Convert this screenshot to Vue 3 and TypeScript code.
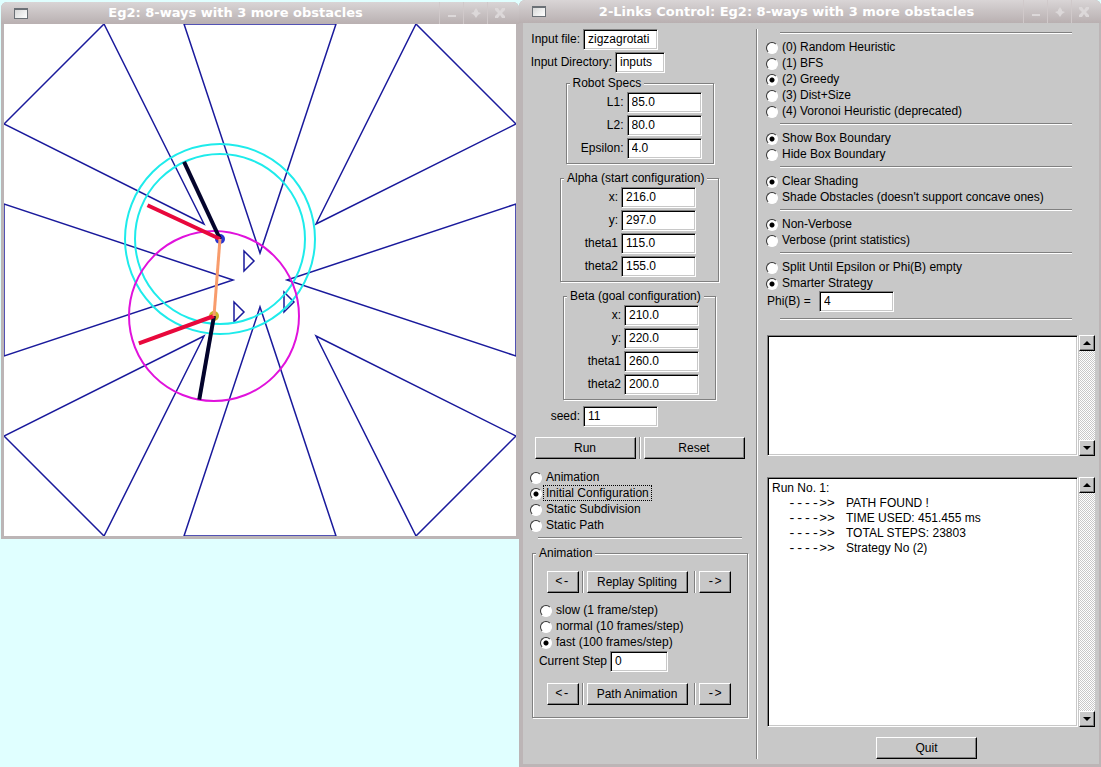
<script setup lang="ts">
import { reactive, ref } from 'vue'

interface Config { x: string; y: string; theta1: string; theta2: string }
interface Field { id: string; label: string; value: string }
interface RadioGroup { name: string; options: string[]; selected: number }

const SIZE = 512

const files = reactive({ file: 'zigzagrotati', dir: 'inputs' })

const specs = reactive<Field[]>([
  { id: 'l1', label: 'L1:', value: '85.0' },
  { id: 'l2', label: 'L2:', value: '80.0' },
  { id: 'epsilon', label: 'Epsilon:', value: '4.0' },
])

const configFields = (prefix: string, c: Config): Field[] => [
  { id: prefix + '-x', label: 'x:', value: c.x },
  { id: prefix + '-y', label: 'y:', value: c.y },
  { id: prefix + '-t1', label: 'theta1', value: c.theta1 },
  { id: prefix + '-t2', label: 'theta2', value: c.theta2 },
]

const boxes = reactive([
  { kind: 'specs', title: 'Robot Specs', fields: specs },
  { kind: 'alpha', title: 'Alpha (start configuration)', fields: configFields('alpha', { x: '216.0', y: '297.0', theta1: '115.0', theta2: '155.0' }) },
  { kind: 'beta', title: 'Beta (goal configuration)', fields: configFields('beta', { x: '210.0', y: '220.0', theta1: '260.0', theta2: '200.0' }) },
])

const seed = ref('11')
const step = ref('0')
const phi = ref('4')

const display = reactive<RadioGroup>({
  name: 'display',
  options: ['Animation', 'Initial Configuration', 'Static Subdivision', 'Static Path'],
  selected: 1,
})
const speed = reactive<RadioGroup>({
  name: 'speed',
  options: ['slow (1 frame/step)', 'normal (10 frames/step)', 'fast (100 frames/step)'],
  selected: 2,
})
const options = reactive<RadioGroup[]>([
  { name: 'heuristic', options: ['(0) Random Heuristic', '(1) BFS', '(2) Greedy', '(3) Dist+Size', '(4) Voronoi Heuristic (deprecated)'], selected: 2 },
  { name: 'boundary', options: ['Show Box Boundary', 'Hide Box Boundary'], selected: 0 },
  { name: 'shading', options: ['Clear Shading', "Shade Obstacles (doesn't support concave ones)"], selected: 0 },
  { name: 'verbose', options: ['Non-Verbose', 'Verbose (print statistics)'], selected: 0 },
  { name: 'strategy', options: ['Split Until Epsilon or Phi(B) empty', 'Smarter Strategy'], selected: 1 },
])

const log = ['PATH FOUND !', 'TIME USED: 451.455 ms', 'TOTAL STEPS: 23803', 'Strategy No (2)']

const obstacles = [
  '100,0 0,100 200,200',
  '180,0 332,0 256,229',
  '412,0 512,100 312,200',
  '0,180 0,332 229,256',
  '512,180 512,332 283,256',
  '0,412 100,512 200,312',
  '180,512 332,512 256,283',
  '512,412 412,512 312,312',
  '240,227 240,247 250,237',
  '230,278 230,298 240,288',
  '280,268 280,288 290,278',
]

const tip = (x: number, y: number, len: number, deg: number) => ({
  x: x + len * Math.cos((deg * Math.PI) / 180),
  y: SIZE - y - len * Math.sin((deg * Math.PI) / 180),
})

const robots = [
  { id: 'start', x: 216, y: SIZE - 297, a: tip(216, 297, 85, 115), b: tip(216, 297, 80, 155) },
  { id: 'goal', x: 210, y: SIZE - 220, a: tip(210, 220, 85, 260), b: tip(210, 220, 80, 200) },
]
</script>

<template>
  <div class="desktop">
    <section class="window view">
      <header class="titlebar">
        <span class="menu-icon"></span>
        <h1>Eg2: 8-ways with 3 more obstacles</h1>
        <button class="wm" type="button" aria-label="Minimize"><svg viewBox="0 0 12 12"><path d="M2 8h8v2H2z" /></svg></button>
        <button class="wm" type="button" aria-label="Maximize"><svg viewBox="0 0 12 12"><path d="M6 1l2 3v1l3 1-3 2-2 3-2-3-3-2 3-1V4z" /></svg></button>
        <button class="wm" type="button" aria-label="Close"><svg viewBox="0 0 12 12"><path d="M1 1h3l2 3 2-3h3v2L8 6l3 3v2H8L6 8l-2 3H1V9l3-3-3-3z" /></svg></button>
      </header>
      <svg class="canvas" :viewBox="`0 0 ${SIZE} ${SIZE}`">
        <g class="obstacle">
          <polygon v-for="p in obstacles" :key="p" :points="p" />
        </g>
        <circle class="reach" cx="216" cy="215" r="85" />
        <circle class="reach" cx="216" cy="215" r="95" />
        <circle class="goal-reach" cx="210" cy="292" r="85" />
        <circle v-for="r in robots" :key="r.id" :class="r.id" :cx="r.x" :cy="r.y" r="5" />
        <g v-for="r in robots" :key="r.id + '-links'">
          <line class="link-a" :x1="r.x" :y1="r.y" :x2="r.a.x" :y2="r.a.y" />
          <line class="link-b" :x1="r.x" :y1="r.y" :x2="r.b.x" :y2="r.b.y" />
        </g>
        <line class="path" :x1="robots[0].x" :y1="robots[0].y" :x2="robots[1].x" :y2="robots[1].y" />
      </svg>
    </section>

    <section class="window control">
      <header class="titlebar">
        <span class="menu-icon"></span>
        <h1>2-Links Control: Eg2: 8-ways with 3 more obstacles</h1>
        <button class="wm" type="button" aria-label="Minimize"><svg viewBox="0 0 12 12"><path d="M2 8h8v2H2z" /></svg></button>
        <button class="wm" type="button" aria-label="Maximize"><svg viewBox="0 0 12 12"><path d="M6 1l2 3v1l3 1-3 2-2 3-2-3-3-2 3-1V4z" /></svg></button>
        <button class="wm" type="button" aria-label="Close"><svg viewBox="0 0 12 12"><path d="M1 1h3l2 3 2-3h3v2L8 6l3 3v2H8L6 8l-2 3H1V9l3-3-3-3z" /></svg></button>
      </header>

      <div class="body">
        <form class="left" @submit.prevent>
          <div class="row">
            <label class="cap" for="file">Input file:</label>
            <input id="file" v-model="files.file" class="text" type="text" />
          </div>
          <div class="row">
            <label class="cap wide" for="dir">Input Directory:</label>
            <input id="dir" v-model="files.dir" class="text short" type="text" />
          </div>

          <fieldset v-for="b in boxes" :key="b.kind" class="box" :class="b.kind">
            <legend>{{ b.title }}</legend>
            <div v-for="f in b.fields" :key="f.id" class="row">
              <label class="cap" :for="f.id">{{ f.label }}</label>
              <input :id="f.id" v-model="f.value" class="text" type="text" />
            </div>
          </fieldset>

          <div class="row seed">
            <label class="cap" for="seed">seed:</label>
            <input id="seed" v-model="seed" class="text" type="text" />
          </div>

          <div class="buttons main">
            <button class="push" type="button">Run</button>
            <i class="vsep"></i>
            <button class="push" type="button">Reset</button>
          </div>

          <div class="radios display" role="radiogroup">
            <label v-for="(o, i) in display.options" :key="o" class="radio">
              <input v-model="display.selected" type="radio" :name="display.name" :value="i" />
              <span :class="{ focus: display.selected === i }">{{ o }}</span>
            </label>
          </div>
          <hr class="short-rule" />

          <fieldset class="box anim">
            <legend>Animation</legend>
            <div class="buttons">
              <button class="push arrow" type="button">&lt;-</button>
              <i class="vsep"></i>
              <button class="push" type="button">Replay Spliting</button>
              <i class="vsep late"></i>
              <button class="push arrow" type="button">-&gt;</button>
            </div>
            <div class="radios" role="radiogroup">
              <label v-for="(o, i) in speed.options" :key="o" class="radio">
                <input v-model="speed.selected" type="radio" :name="speed.name" :value="i" />
                <span>{{ o }}</span>
              </label>
            </div>
            <div class="row">
              <label class="cap" for="step">Current Step</label>
              <input id="step" v-model="step" class="text" type="text" />
            </div>
            <div class="buttons">
              <button class="push arrow" type="button">&lt;-</button>
              <i class="vsep"></i>
              <button class="push" type="button">Path Animation</button>
              <i class="vsep late"></i>
              <button class="push arrow" type="button">-&gt;</button>
            </div>
          </fieldset>
        </form>

        <i class="divider"></i>

        <form class="right" @submit.prevent>
          <hr />
          <template v-for="(g, n) in options" :key="g.name">
            <div class="radios" role="radiogroup">
              <label v-for="(o, i) in g.options" :key="o" class="radio">
                <input v-model="g.selected" type="radio" :name="g.name" :value="i" />
                <span>{{ o }}</span>
              </label>
            </div>
            <hr v-if="n < options.length - 1" />
          </template>
          <div class="row phi">
            <label class="cap" for="phi">Phi(B) =</label>
            <input id="phi" v-model="phi" class="text" type="text" />
          </div>
          <hr />

          <div class="pane stats">
            <textarea class="sunken" readonly aria-label="Statistics"></textarea>
            <div class="scroll">
              <button type="button" aria-label="Scroll up"><svg viewBox="0 0 8 4"><path d="M0 4L4 0l4 4z" /></svg></button>
              <button type="button" aria-label="Scroll down"><svg viewBox="0 0 8 4"><path d="M0 0h8L4 4z" /></svg></button>
            </div>
          </div>
          <div class="pane log">
            <div class="sunken" role="log">
              <p>Run No. 1:</p>
              <p v-for="l in log" :key="l" class="entry"><span class="mark">----&gt;&gt;</span><span>{{ l }}</span></p>
            </div>
            <div class="scroll">
              <button type="button" aria-label="Scroll up"><svg viewBox="0 0 8 4"><path d="M0 4L4 0l4 4z" /></svg></button>
              <button type="button" aria-label="Scroll down"><svg viewBox="0 0 8 4"><path d="M0 0h8L4 4z" /></svg></button>
            </div>
          </div>
          <button class="push quit" type="button">Quit</button>
        </form>
      </div>
    </section>
  </div>
</template>

<style>
body {
  margin: 0;
  background: #e0ffff;
}
</style>

<style scoped>
* {
  box-sizing: border-box;
}
.desktop {
  display: grid;
  grid-template-columns: minmax(0, 519fr) minmax(560px, 582fr);
  align-items: start;
  min-height: 100vh;
  color: #000;
  background: #e0ffff;
  font: 12px/14px "Liberation Sans", Arial, sans-serif;
}
.window {
  background: #bcb5b6;
}
.view {
  margin: 2px 0 0 1px;
  padding: 0 3px 3px;
  border-radius: 6px 6px 0 0;
}
.control {
  display: flex;
  flex-direction: column;
  align-self: stretch;
  padding: 0 2px 3px 4px;
  border-radius: 6px 6px 0 0;
}
.titlebar {
  display: flex;
  align-items: center;
  height: 22px;
  margin: 0 -3px;
  padding: 0 8px 0 13px;
  border-radius: 6px 6px 0 0;
  background: linear-gradient(#d9d5d6, #cac4c5 45%, #b9b0b1);
}
.control .titlebar {
  height: 23px;
  margin: 0 -2px 0 -4px;
  padding-right: 6px;
}
.menu-icon {
  width: 14px;
  height: 11px;
  border: 1px solid #6b7076;
  border-top-width: 2px;
  background: linear-gradient(135deg, #d8d8d8, #fff);
}
h1 {
  flex: 1;
  margin: 0;
  padding-left: 4px;
  color: #fff;
  font: bold 13px/16px "DejaVu Sans", sans-serif;
  text-align: center;
  white-space: nowrap;
}
.wm {
  display: grid;
  place-items: center;
  width: 24px;
  height: 100%;
  padding: 0;
  border: 0;
  border-left: 1px solid #d0c9ca;
  background: none;
}
.wm svg {
  width: 12px;
  height: 12px;
  fill: #dcd8d9;
}
.canvas {
  display: block;
  width: 100%;
  height: auto;
  background: #fff;
  fill: none;
}
.obstacle {
  stroke: #1a1a9c;
  stroke-width: 1.5;
}
.reach {
  stroke: #1eebeb;
  stroke-width: 2;
}
.goal-reach {
  stroke: #e012dc;
  stroke-width: 2;
}
.start {
  fill: #2a35cf;
}
.goal {
  fill: #c9b62c;
}
.link-a {
  stroke: #04042c;
  stroke-width: 4;
}
.link-b {
  stroke: #e8083c;
  stroke-width: 4;
}
.path {
  stroke: #f89c6c;
  stroke-width: 3;
}

.body {
  display: flex;
  flex: 1;
  padding: 6px 0 5px;
  background: #c8c8c8;
}
.left {
  width: 233px;
}
.divider {
  width: 2px;
  border-left: 1px solid #808080;
  background: #fff;
}
.right {
  display: flex;
  flex: 1;
  flex-direction: column;
  min-width: 0;
  padding: 3px 4px 0 8px;
}
.row {
  display: flex;
  align-items: flex-start;
  height: 23px;
}
.cap {
  width: 60px;
  padding-right: 3px;
  line-height: 20px;
  text-align: right;
  white-space: nowrap;
}
.cap.wide {
  width: 92px;
}
.text,
.sunken {
  border: 1px solid;
  border-color: #808080 #fff #fff #808080;
  border-radius: 0;
  outline: 0;
  color: #000;
  background: #fff;
  box-shadow: inset 1px 1px #000, inset -1px -1px #c8c8c8;
  font: inherit;
}
.text {
  width: 75px;
  height: 21px;
  padding: 0 4px 1px;
}
.text.short {
  width: 50px;
}
.box {
  min-width: 0;
  margin: 7px auto 0;
  padding: 2px 0;
  border: 1px solid #808080;
  box-shadow: 1px 1px #fff, inset 1px 1px #fff;
}
.box legend {
  height: 14px;
  margin-left: 3px;
  padding: 0 3px;
  background: #c8c8c8;
  white-space: nowrap;
}
.specs {
  width: 148px;
  margin-top: 1px;
}
.alpha {
  width: 159px;
}
.beta {
  width: 153px;
}
.seed {
  margin-top: 6px;
}
.buttons {
  display: flex;
  justify-content: center;
  gap: 3px;
}
.buttons.main {
  margin-top: 8px;
}
.push {
  width: 101px;
  height: 22px;
  padding: 0;
  border: 1px solid;
  border-color: #fff #000 #000 #fff;
  border-radius: 0;
  color: #000;
  background: #c8c8c8;
  box-shadow: inset -1px -1px #808080;
  font: inherit;
}
.push.arrow {
  width: 32px;
  font-family: "Liberation Mono", monospace;
}
.vsep {
  width: 2px;
  border-left: 1px solid #808080;
  background: #fff;
}
.vsep.late {
  margin-left: 3px;
}
.display {
  margin-top: 10px;
  padding-left: 7px;
}
.radio {
  display: flex;
  align-items: center;
  gap: 1px;
  height: 16px;
}
.radio input {
  flex: none;
  width: 12px;
  height: 12px;
  margin: 1px 0 0;
  border: 1px solid;
  border-color: #333 #fff #fff #333;
  border-radius: 50%;
  outline: 0;
  background: #fff;
  appearance: none;
}
.radio input:checked {
  background: radial-gradient(circle, #000 2px, #fff 3px);
}
.radio span {
  padding: 0 2px;
  border: 1px solid transparent;
  white-space: nowrap;
}
.radio .focus {
  border: 1px dotted #000;
}
hr {
  flex: none;
  height: 2px;
  margin: 4px 23px 5px 14px;
  border: 0;
  border-top: 1px solid #808080;
  background: #fff;
}
.short-rule {
  margin: 4px 14px 0 15px;
}
.anim {
  width: 216px;
  margin-left: 9px;
  padding-top: 11px;
  padding-bottom: 12px;
}
.anim .buttons {
  padding-right: 3px;
}
.anim .radios {
  margin-top: 9px;
  padding-left: 7px;
}
.anim .row {
  margin: 1px 0 9px;
}
.anim .cap {
  width: 77px;
}
.anim .text {
  width: 58px;
}
.right > hr:first-child {
  margin-top: 0;
}
.phi .cap {
  width: 53px;
  padding-left: 1px;
  text-align: left;
}
.phi + hr {
  margin-bottom: 15px;
}
.pane {
  display: flex;
  gap: 1px;
  margin-left: 1px;
}
.stats {
  height: 121px;
}
.log {
  flex: 1;
  min-height: 100px;
  margin-top: 21px;
}
.sunken {
  flex: 1;
  min-width: 0;
  padding: 3px 4px;
  line-height: 15px;
  resize: none;
}
.sunken p {
  margin: 0;
  white-space: nowrap;
}
.entry {
  display: flex;
  padding-left: 16px;
}
.mark {
  width: 58px;
  font-family: "Liberation Mono", monospace;
  font-size: 13px;
}
.scroll {
  display: flex;
  flex-direction: column;
  justify-content: space-between;
  width: 16px;
  background: repeating-conic-gradient(#fff 0 25%, #c8c8c8 0 50%) 0 0 / 2px 2px;
}
.scroll button {
  display: grid;
  place-items: center;
  width: 16px;
  height: 16px;
  padding: 0;
  border: 1px solid;
  border-color: #fff #000 #000 #fff;
  background: #c8c8c8;
  box-shadow: inset -1px -1px #808080;
}
.scroll svg {
  width: 8px;
  height: 4px;
}
.quit {
  align-self: center;
  margin: 10px 8px 0 0;
}
</style>
